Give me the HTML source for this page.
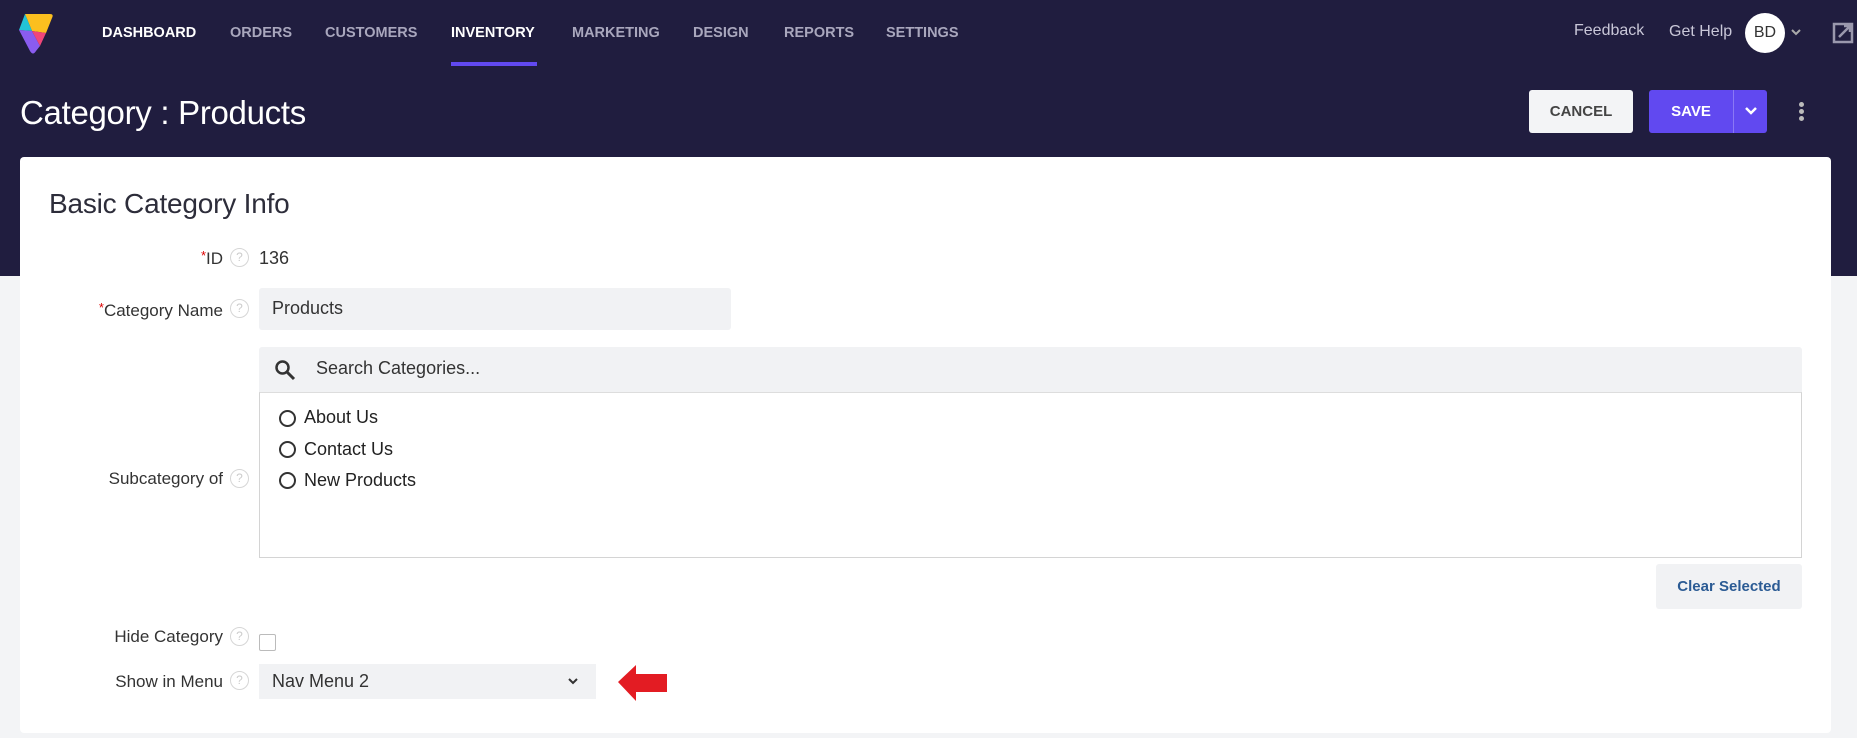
<!DOCTYPE html>
<html><head><meta charset="utf-8"><style>
*{box-sizing:border-box;margin:0;padding:0}
body{width:1857px;height:738px;overflow:hidden;background:#f3f4f6;font-family:"Liberation Sans",sans-serif;position:relative}
.hdr{position:absolute;left:0;top:0;width:1857px;height:276px;background:#201d3f}
.a{position:absolute;white-space:nowrap}
.nav{top:25px;font-size:14.5px;font-weight:bold;color:#a9a7bd}
.card{position:absolute;left:20px;top:157px;width:1811px;height:576px;background:#fff;border-radius:4px}
.lbl{font-size:17px;color:#333;text-align:right;width:200px}
.q{position:absolute;width:19px;height:19px;border:1.5px solid #d6d6d6;border-radius:50%;color:#ccc;font-size:12px;text-align:center;line-height:16px}
.star{color:#d00;font-size:13px;vertical-align:4px}
.radio{position:absolute;left:279px;width:17px;height:17px;border:2px solid #333;border-radius:50%}
.rt{font-size:18px;color:#222;left:304px}
</style></head><body>
<div class="hdr"></div>
<svg class="a" style="left:0;top:0" width="70" height="70" viewBox="0 0 70 70">
<path d="M25 14 L50 14 Q54 14 52 18 L46 33 L32 31 Z" fill="#fbbf1f"/>
<path d="M25 14 L32 31 L19 30 Z" fill="#22c3d6"/>
<path d="M19 30 L32 31 L40 46 L36 51 Q33 56 30 51 Z" fill="#8a5cf0"/>
<path d="M32 31 L46 33 L40 46 Z" fill="#f0467a"/>
</svg>
<div class="a nav" style="left:102px;color:#fff">DASHBOARD</div>
<div class="a nav" style="left:230px">ORDERS</div>
<div class="a nav" style="left:325px">CUSTOMERS</div>
<div class="a nav" style="left:451px;color:#fff">INVENTORY</div>
<div class="a nav" style="left:572px">MARKETING</div>
<div class="a nav" style="left:693px">DESIGN</div>
<div class="a nav" style="left:784px">REPORTS</div>
<div class="a nav" style="left:886px">SETTINGS</div>
<div class="a" style="left:451px;top:62px;width:86px;height:4px;background:#6149f0"></div>
<div class="a" style="left:1574px;top:22px;font-size:16px;color:#c9c7d8">Feedback</div>
<div class="a" style="left:1669px;top:23px;font-size:16px;color:#c9c7d8">Get Help</div>
<div class="a" style="left:1745px;top:13px;width:40px;height:40px;border-radius:50%;background:#fff;font-size:16px;color:#333;text-align:center;line-height:40px">BD</div>
<svg class="a" style="left:1790px;top:28px" width="12" height="8"><path d="M2 2 L6 6 L10 2" stroke="#aaa" stroke-width="2" fill="none"/></svg>
<svg class="a" style="left:1832px;top:22px" width="22" height="22"><rect x="2" y="2" width="18" height="18" fill="none" stroke="#9a98ad" stroke-width="2.5"/><path d="M7 15 L18 4 M12 4 H18 V10" stroke="#9a98ad" stroke-width="2.5" fill="none"/></svg>
<div class="a" style="left:20px;top:94px;font-size:33px;color:#fff;letter-spacing:-0.3px">Category : Products</div>
<div class="a" style="left:1529px;top:90px;width:104px;height:43px;background:#f3f4f6;border-radius:3px;font-size:15px;font-weight:bold;color:#444;text-align:center;line-height:43px">CANCEL</div>
<div class="a" style="left:1649px;top:90px;width:118px;height:43px;background:#6149f0;border-radius:3px"></div>
<div class="a" style="left:1649px;top:90px;width:84px;height:43px;font-size:15px;font-weight:bold;color:#fff;text-align:center;line-height:43px">SAVE</div>
<div class="a" style="left:1733px;top:90px;width:1px;height:43px;background:#8a78f5"></div>
<svg class="a" style="left:1744px;top:106px" width="14" height="10"><path d="M2 2 L7 7 L12 2" stroke="#fff" stroke-width="2.5" fill="none"/></svg>
<div class="a" style="left:1799px;top:102px;width:5px;height:5px;border-radius:50%;background:#bbb;box-shadow:0 7px 0 #bbb,0 14px 0 #bbb"></div>
<div class="card"></div>
<div class="a" style="left:49px;top:188px;font-size:28px;color:#2d2d3a;letter-spacing:-0.2px">Basic Category Info</div>
<div class="a lbl" style="left:23px;top:248px"><span class="star">*</span>ID</div>
<div class="q" style="left:230px;top:248px">?</div>
<div class="a" style="left:259px;top:248px;font-size:18px;color:#333">136</div>
<div class="a lbl" style="left:23px;top:300px"><span class="star">*</span>Category Name</div>
<div class="q" style="left:230px;top:299px">?</div>
<div class="a" style="left:259px;top:288px;width:472px;height:42px;background:#f1f2f4;border-radius:3px;font-size:18px;color:#333;padding:10px 13px">Products</div>
<div class="a" style="left:259px;top:347px;width:1543px;height:45px;background:#f1f2f4;border-radius:3px 3px 0 0"></div>
<svg class="a" style="left:274px;top:359px" width="22" height="22"><circle cx="8.5" cy="8.5" r="6" stroke="#333" stroke-width="2.5" fill="none"/><path d="M13 13 L20 20" stroke="#333" stroke-width="3"/></svg>
<div class="a" style="left:316px;top:358px;font-size:18px;color:#333">Search Categories...</div>
<div class="a" style="left:259px;top:392px;width:1543px;height:166px;border:1px solid #d4d4d4;border-top:1px solid #ddd"></div>
<div class="radio" style="top:410px"></div><div class="a rt" style="top:407px">About Us</div>
<div class="radio" style="top:441px"></div><div class="a rt" style="top:439px">Contact Us</div>
<div class="radio" style="top:472px"></div><div class="a rt" style="top:470px">New Products</div>
<div class="a lbl" style="left:23px;top:469px">Subcategory of</div>
<div class="q" style="left:230px;top:469px">?</div>
<div class="a" style="left:1656px;top:564px;width:146px;height:45px;background:#f1f2f4;border-radius:3px;font-size:15px;font-weight:bold;color:#2b5b94;text-align:center;line-height:45px">Clear Selected</div>
<div class="a lbl" style="left:23px;top:627px">Hide Category</div>
<div class="q" style="left:230px;top:627px">?</div>
<div class="a" style="left:259px;top:634px;width:17px;height:17px;border:1.5px solid #bbb;border-radius:2px"></div>
<div class="a lbl" style="left:23px;top:672px">Show in Menu</div>
<div class="q" style="left:230px;top:671px">?</div>
<div class="a" style="left:259px;top:664px;width:337px;height:35px;background:#f1f2f4;font-size:18px;color:#333;padding:7px 13px">Nav Menu 2</div>
<svg class="a" style="left:567px;top:677px" width="12" height="9"><path d="M2 2 L6 6 L10 2" stroke="#333" stroke-width="2" fill="none"/></svg>
<svg class="a" style="left:617px;top:664px" width="52" height="38"><path d="M1 18 L19 1 L19 10 L50 10 L50 28 L19 28 L19 37 Z" fill="#e31c23"/></svg>
</body></html>
